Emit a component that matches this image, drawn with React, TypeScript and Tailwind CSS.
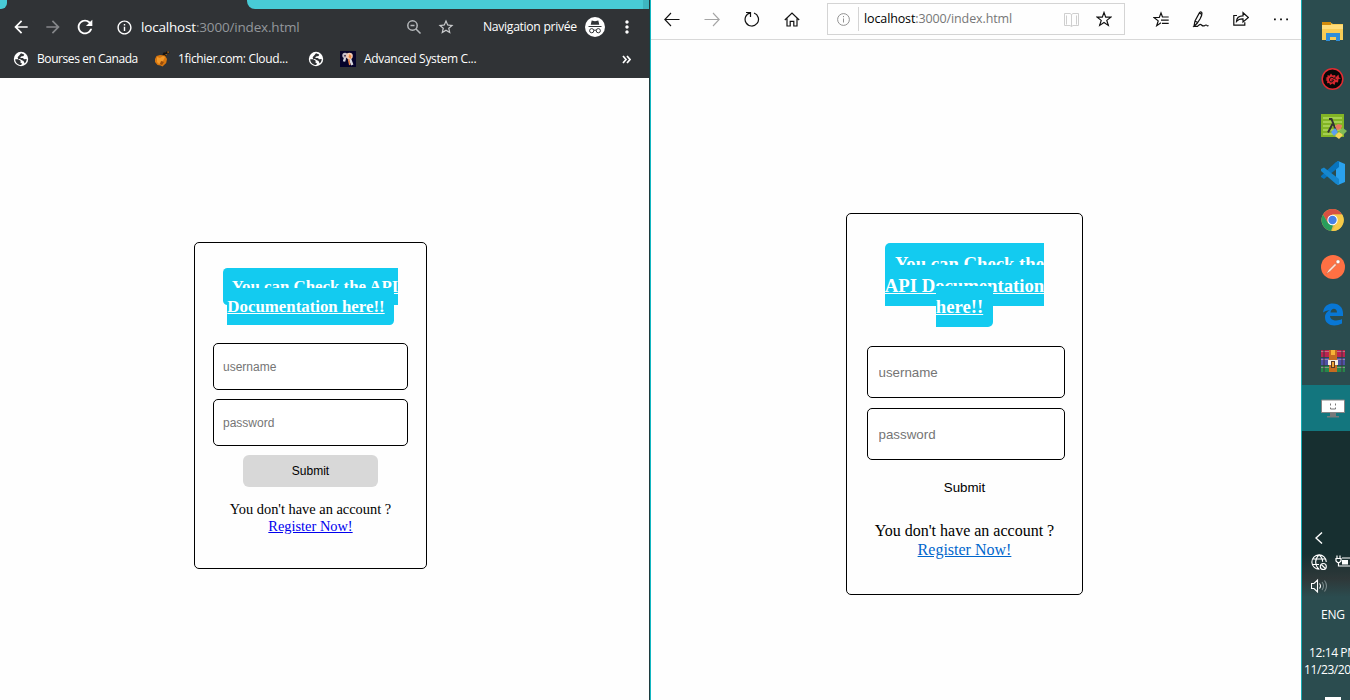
import React from 'react';
import { MdArrowBack, MdArrowForward, MdRefresh, MdInfoOutline, MdStarBorder, MdMoreVert } from 'react-icons/md';

const SEGOE = "font-['Open_Sans','Noto_Sans',sans-serif]";

function Globe() {
  return (
    <svg className="h-4 w-4 shrink-0" viewBox="0 0 16 16">
      <circle cx="8" cy="8" r="7.2" fill="#fff" />
      <path d="M2.2 8.2h3.2l2.2 1.6v2.1l1.6.6-1.1 1.6C4.7 14 2.2 11.300 2.200 8.200zM8 2.200l3.200 1.200-.6 1.500-2.600.600-.800 1.400h2.700l1.300 1.300 2.500-.3c0 1.800-.7 3.400-2 4.500l-1.200-2.300-2-1-1.600-1.200H5.200L4.600 6.300 6.600 4z" fill="#303336" />
    </svg>
  );
}

function Fruit() {
  return (
    <svg className="h-4 w-4 shrink-0" viewBox="0 0 16 16">
      <path d="M8 5l1.500-3.500H12V.5h3.500v1.700H13L12 5.500z" fill="#15120e" />
      <path d="M13.300.6h1.800v1.100h-1.800zM11.500 3h1.300v1.300h-1.300z" fill="#b06a17" />
      <path d="M1 8l1.500-3L6 4l5 .5 2 3.500-.8 4-3.700 3.500-2-1-3-.5L1 11z" fill="#d8770f" />
      <path d="M3 6l3 1 3-2 2 1-2 4-4 3-2-2z" fill="#f29a2b" />
      <path d="M7 10l3 1-2 3-2-1z" fill="#964c0b" />
    </svg>
  );
}

function KeysIcon() {
  return (
    <svg className="h-4 w-4 shrink-0" viewBox="0 0 16 16">
      <path fill="#06032b" d="M0 0h16v16H0z" />
      <path d="M5 7l-1 3.500M10 8l2.300 6" stroke="#d7d7e0" strokeWidth="2.400" />
      <path d="M8.500 8l1.300 6" stroke="#e98245" strokeWidth="1.500" />
      <circle cx="5" cy="4.500" r="2.700" fill="#c5bdc9" />
      <circle cx="9.500" cy="5" r="3.300" fill="#f0c9b4" />
      <path d="M9.500 3l2 2-1 3-2-2z" fill="#ed873e" />
      <path d="M4 4h2v1.500H4z" fill="#54465d" />
    </svg>
  );
}

function ChromeWindow() {
  return (
    <section className="flex h-full w-[649px] shrink-0 flex-col bg-[#fefefe]">
      <header className={`h-[78px] bg-[#303336] text-white ${SEGOE}`}>
        <div className="flex h-[9px] justify-between">
          <span className="w-[7px] rounded-br-[6px] bg-[#48cbd6]" />
          <span className="w-[402px] rounded-bl-[8px] border-r-[6px] border-[#3eb5c0] bg-[#48cbd6]" />
        </div>
        <div className="flex h-9 items-center">
          <MdArrowBack className="ml-[11px] h-5 w-5" />
          <MdArrowForward className="ml-3 h-5 w-5 text-[#85878a]" />
          <MdRefresh className="ml-[11px] h-[22px] w-[22px]" />
          <MdInfoOutline className="ml-[20px] h-[17px] w-[17px]" />
          <span className="ml-2 w-[160px] whitespace-nowrap text-[13.500px] tracking-[-0.18px]">
            localhost<span className="text-[#93979b]">:3000/index.html</span>
          </span>
          <svg className="ml-[105px] h-4 w-4" viewBox="0 0 16 16" fill="none" stroke="#b5b8bb" strokeWidth="1.500">
            <circle cx="6.500" cy="6.500" r="4.700" />
            <path d="M10 10l4.500 4.500M4.500 6.500h4" />
          </svg>
          <MdStarBorder className="ml-[15px] h-[18px] w-[18px] text-[#c9cbcd]" />
          <span className="ml-[28px] w-[94px] whitespace-nowrap text-[12.200px] tracking-[-0.32px]">Navigation privée</span>
          <svg className="ml-[8px] h-5 w-5" viewBox="0 0 20 20">
            <circle cx="10" cy="10" r="10" fill="#fff" />
            <path d="M6.700 3.500l3.300.7 3.300-.7 1 4.200H5.700zM3.500 9h13v1h-13z" fill="#303336" />
            <g fill="none" stroke="#303336" strokeWidth="1">
              <circle cx="6.700" cy="13.700" r="2.100" />
              <circle cx="13.300" cy="13.700" r="2.100" />
              <path d="M8.800 13.400q1.200-.8 2.400 0" />
            </g>
          </svg>
          <MdMoreVert className="ml-[12px] h-5 w-5" />
        </div>
        <div className="flex h-7 items-center whitespace-nowrap text-[12px]">
          <span className="ml-[13px] flex w-[141px] items-center gap-2"><Globe /><span className="tracking-[-0.42px]">Bourses en Canada</span></span>
          <span className="flex w-[154px] items-center gap-2"><Fruit /><span className="tracking-[-0.34px]">1fichier.com: Cloud...</span></span>
          <span className="flex w-8"><Globe /></span>
          <span className="flex items-center gap-2"><KeysIcon /><span className="tracking-[-0.31px]">Advanced System C...</span></span>
          <svg className="ml-auto mr-[18px] h-[9px] w-[9px]" viewBox="0 0 9 9" fill="none" stroke="#fff" strokeWidth="1.700">
            <path d="M1 1l3 3.500-3 3.500M5 1l3 3.500-3 3.500" />
          </svg>
        </div>
      </header>
      <main className="flex justify-center pr-[28px] pt-[164px]">
        <form className="flex h-[327px] w-[233px] flex-col items-center rounded-[5px] border border-black pt-[34px] font-['Liberation_Serif',serif]">
          <h3 className="w-[194px] text-center text-[16.850px] font-bold leading-[20px] text-white">
            <a href="#docs" className="rounded-[4.500px] bg-[#13cbf0] p-[9px] underline">You can Check the API Documentation here!!</a>
          </h3>
          <input aria-label="username" placeholder="username" className="mt-[26px] h-[47px] w-[195px] rounded-[5px] border border-black bg-white px-[9px] font-['Liberation_Sans',sans-serif] text-[12px] placeholder:text-[#757575]" />
          <input aria-label="password" type="password" placeholder="password" className="mt-[9px] h-[47px] w-[195px] rounded-[5px] border border-black bg-white px-[9px] font-['Liberation_Sans',sans-serif] text-[12px] placeholder:text-[#757575]" />
          <button type="button" className="mt-[9px] h-8 w-[135px] rounded-[6px] bg-[#d8d8d8] font-['Liberation_Sans',sans-serif] text-[12px] text-black">Submit</button>
          <p className="mt-[14px] text-center text-[14.400px] leading-[17px] text-black">
            You don't have an account ?<br />
            <a href="#register" className="text-[#0000ee] underline">Register Now!</a>
          </p>
        </form>
      </main>
    </section>
  );
}

function EdgeWindow() {
  return (
    <section className="flex h-full w-[650px] shrink-0 flex-col bg-[#fefefe]">
      <header className="flex h-10 items-center border-b border-[#d8d8d8] pb-px pl-[13px]">
        <svg className="h-4 w-4" viewBox="0 0 16 16" fill="none" stroke="#111" strokeWidth="1.100"><path d="M15.500 8.500H1M7 2L.8 8.500 7 15" /></svg>
        <svg className="ml-6 h-4 w-4" viewBox="0 0 16 16" fill="none" stroke="#a5a5a5" strokeWidth="1.100"><path d="M.5 8.500H15M9 2l6.200 6.500L9 15" /></svg>
        <svg className="ml-6 h-4 w-4" viewBox="0 0 16 16" fill="none" stroke="#111" strokeWidth="1.200"><path d="M2 1.500h4.500V6M6.300 1.800A6.700 6.700 0 1 0 10 2" /></svg>
        <svg className="ml-6 h-4 w-4" viewBox="0 0 16 16" fill="none" stroke="#111" strokeWidth="1.200"><path d="M.8 9L8 2l7.200 7M3 7.500V15h3.200v-4.700h3.600V15H13V7.500" /></svg>
        <div className={`ml-[27px] flex h-8 w-[298px] items-center border border-[#d4d4d4] ${SEGOE}`}>
          <svg className="ml-[9px] h-[13px] w-[13px]" viewBox="0 0 13 13" fill="none" stroke="#929292"><circle cx="6.500" cy="6.500" r="5.900" /><path d="M6.500 5.500v4M6.500 3v1.200" /></svg>
          <span className="ml-2 h-6 w-px bg-[#d4d4d4]" />
          <span className="ml-[5px] w-[148px] whitespace-nowrap pt-px text-[12.500px] tracking-[-0.12px] text-black">localhost<span className="text-[#777]">:3000/index.html</span></span>
          <svg className="ml-[52px] h-[15px] w-[15px]" viewBox="0 0 15 15" fill="none" stroke="#cfcfcf"><path d="M.5 1.500h5.500l1.500 1 1.500-1h5.500v12H9l-1.500 1-1.500-1H.5zM7.500 2.500v12M2.500 3.500v9M12.500 3.500v9" /></svg>
          <svg className="ml-[17px] h-4 w-4" viewBox="0 0 16 16" fill="none" stroke="#111" strokeWidth="1.200"><path d="M8 1.500l1.700 4.700h5.200l-4.100 3.200 1.500 5L8 11.500l-4.300 2.900 1.500-5L1.100 6.200h5.200z" /></svg>
        </div>
        <svg className="ml-[28px] h-4 w-4" viewBox="0 0 16 16" fill="none" stroke="#111" strokeWidth="1.200"><path d="M9.500 6L8 2 6.300 6.500H1l4.200 3.400-1.500 4.800L8 11.800M9 6h6.700M8 9.200h7.700M9 12.400h6.700" /></svg>
        <svg className="ml-6 h-4 w-4 overflow-visible" viewBox="0 0 16 16" fill="none" stroke="#111" strokeWidth="1.200"><path d="M1 15l1-5L6.500 1.700q1.500-1.700 2.500.3.200 2-2 6L4 12.500zM2 10l2.500 1.500M6.500 2l2 1.200M4 12.500L1 15.300h3.500q2.500-2.800 4-1.300 1.500 1.500 3 .7 1.700-1.300 2.500-.2.500.8 1.500.1" /></svg>
        <svg className="ml-6 h-4 w-4" viewBox="0 0 16 16" fill="none" stroke="#111" strokeWidth="1.200"><path d="M4 4.500H.8v9.700h11v-3M3.500 10.500q.2-5.700 6.500-5.700V1.700l5.400 4.800-5.400 4.500V7.800q-4.200-.2-6.500 2.700z" /></svg>
        <svg className="ml-6 h-4 w-4" viewBox="0 0 16 16" fill="#111"><path d="M1 7.500h1.800v1.800H1zM7.100 7.500h1.800v1.800H7.100zM13.200 7.500H15v1.800h-1.800z" /></svg>
      </header>
      <main className="flex justify-center pr-[23px] pt-[173px]">
        <form className="flex h-[382px] w-[237px] flex-col items-center rounded-[5px] border border-black pt-[39px] font-['Liberation_Serif',serif]">
          <h3 className="w-[172px] text-center text-[18.720px] font-bold leading-[21.500px] text-white">
            <a href="#docs" className="rounded-[5px] bg-[#13cbf0] p-[10px] underline">You can Check the API Documentation here!!</a>
          </h3>
          <input aria-label="username" placeholder="username" className="ml-[2px] mt-[28px] h-[52px] w-[198px] rounded-[5px] border border-black bg-white px-[11px] pt-px font-['Liberation_Sans',sans-serif] text-[13.330px] placeholder:text-[#757575]" />
          <input aria-label="password" type="password" placeholder="password" className="ml-[2px] mt-[10px] h-[52px] w-[198px] rounded-[5px] border border-black bg-white px-[11px] pt-px font-['Liberation_Sans',sans-serif] text-[13.330px] placeholder:text-[#757575]" />
          <button type="button" className="mt-[10px] h-9 w-[150px] rounded-[6px] pt-px font-['Liberation_Sans',sans-serif] text-[13.330px] text-black">Submit</button>
          <p className="mt-[15px] text-center text-[16px] leading-[19px] text-black">
            You don't have an account ?<br />
            <a href="#register" className="text-[#0066cc] underline">Register Now!</a>
          </p>
        </form>
      </main>
    </section>
  );
}

const taskIcons = [
  <g key="folder">
    <path d="M1 3h9l2 1h10v16H1z" fill="#f8cc56" /><path d="M1 2h9v3H1z" fill="#d18b0b" /><path d="M1 5h21v4H1z" fill="#ffdd7b" />
    <path d="M5 21v-8h14v8h-4v-4H9v4z" fill="#2e8edb" />
  </g>,
  <g key="gear">
    <circle cx="11.500" cy="12" r="10.300" fill="#080707" stroke="#e22c32" strokeWidth="1.500" />
    <path d="M4.500 11l2-1V8l2 .7L10 6.500l1.500 2 2.500-.5 1 2 2.500-2.500.5 3 2 1-2.500.5-.5 3.500-2.500-.5-1 3-2-1.500L9 18l-.7-2-2.300.3.300-2.300-1.800-1L6 12z" fill="#d7272e" />
    <path d="M13 11.500q-2-2.500-4-.5-1.500 2.500.5 4 2.500.500 3-2h-2M14.500 9.500l-1 2 2 1" fill="none" stroke="#111" />
  </g>,
  <g key="lambda">
    <path d="M0 0h23v23H0z" fill="#82b425" /><path d="M2 4h19M2 8h19M2 12h19M2 16h19M2 20h19" stroke="#a4cf51" strokeWidth="2" />
    <path d="M8 5h2.500l5 13M11.500 10L7 18.500" fill="none" stroke="#333" strokeWidth="2" />
    <path d="M14 12l3-2 4 1-1 4-4 1z" fill="#e77b5f" /><path d="M10 18l4-4 3 4-4 4z" fill="#5c9eee" /><path d="M18 17l4-3 4 3-4 4z" fill="#80b957" /><path d="M14 22l4-4 4 3-4 4z" fill="#f4d45b" />
  </g>,
  <g key="code">
    <path d="M17 0l7 3v18l-7 3-2-2V2z" fill="#2aa1ed" />
    <path d="M18 6L3 18l-3-2v-1L15 1l3-1z" fill="#0873bd" /><path d="M18 18L3 6.500 0 8v2l15 13 3 1z" fill="#1687cf" />
  </g>,
  <g key="chrome">
    <circle cx="11.500" cy="12" r="11" fill="#ddb94f" /><path d="M2 6.500a11 11 0 0 1 19 0h-9.500L7 15z" fill="#d85142" />
    <path d="M2 6.500L7 15l5 2.500-2 5.400A11 11 0 0 1 2 6.500z" fill="#299d5c" /><path d="M11.500 6.500h9.800a11 11 0 0 1-10.500 16.500l5-8.200z" fill="#f6ca48" />
    <circle cx="11.500" cy="12" r="5.200" fill="#fff" /><circle cx="11.500" cy="12" r="4.200" fill="#4780e5" />
  </g>,
  <g key="postman">
    <circle cx="12" cy="12" r="12" fill="#ff7043" /><path d="M5 19l2.500-4L14 8.500l1.500 1.500L9 16.500z" fill="#ffe3d7" stroke="#b96344" strokeWidth=".5" /><circle cx="17" cy="6.800" r="2" fill="#fff" stroke="#b96344" strokeWidth=".5" />
  </g>,
  <g key="edge">
    <path d="M2 10.500C3 4 7 1.500 12 1.500c6.500 0 10 4.500 10 9.500v3H9c.2 5 7.500 5.500 12 3v4.500c-8 4-17 1.500-17-6 0-4 2.300-6 5-7.500-3.500.5-5.500 1.500-7 2.500zM9.500 10.500H16c0-5-6-5-6.500 0z" fill="#0877d5" />
  </g>,
  <g key="archive">
    <path d="M0 1h24v7H0z" fill="#bd244e" /><path d="M0 9h24v7H0z" fill="#4e51a5" /><path d="M0 17h24v6H0z" fill="#26864a" />
    <path d="M0 2.500h24M0 10.500h24M0 18.500h24" stroke="#c4a5a7" strokeWidth=".6" /><path d="M3 1v22M21 1v22" stroke="#403044" />
    <path d="M8 1h8v22H8z" fill="#c56b20" /><path d="M7 11h10v5H7z" fill="#f4eee3" /><path d="M10 1h4v5h-4z" fill="#f6b337" /><path d="M10 12h4v7h-4z" fill="#583829" /><path d="M11 13h2v5h-2z" fill="#efa63a" />
  </g>,
  <g key="monitor">
    <path d="M.5 4h23v12.500H.5z" fill="#fff" stroke="#858585" /><path d="M9 17h6v3h3v1.500H6V20h3z" fill="#77797a" />
    <path d="M9.500 7.500v2M14.500 7.500v2M9.500 11.500V13h5v-1.500" fill="none" stroke="#777" />
  </g>,
];

function Taskbar() {
  return (
    <aside className={`flex h-full w-[49px] shrink-0 flex-col overflow-hidden border-l border-[#16aab3] bg-[#2b4c4f] text-white ${SEGOE}`}>
      <div className="h-2 shrink-0" />
      {taskIcons.map((icon, i) => (
        <div key={i} className={i === 8 ? 'mt-px flex h-[46px] shrink-0 items-center bg-[#13767e] pl-[19px]' : 'flex h-[47px] shrink-0 items-center pl-[19px]'}>
          <svg className="h-6 w-6 shrink-0 overflow-visible" viewBox="0 0 24 24">{icon}</svg>
        </div>
      ))}
      <div className="flex grow flex-col bg-[linear-gradient(#172f30_0px,#172f30_123px,#2e3839_148px,#2b4c4f_166px,#2b4c4f_100%)]">
        <svg className="ml-[13px] mt-[101px] h-3 w-2 shrink-0" viewBox="0 0 8 12" fill="none" stroke="#fff" strokeWidth="1.400"><path d="M7 .5L1 6l6 5.500" /></svg>
        <div className="mt-[10px] flex h-4 shrink-0 gap-2 pl-[9px]">
          <svg className="h-4 w-4 shrink-0" viewBox="0 0 16 16" fill="none" stroke="#fff" strokeWidth="1.100"><path d="M8.500 15.300A7.200 7.200 0 1 1 15.300 8M8 .8C3.500 5 3.500 11 8 15.300M8 .8c2.500 2 3.600 4.500 3.600 7M1.500 5h13M1 10.500h7" /><circle cx="12.300" cy="12.500" r="3" /><path d="M10.300 10.500l4 4" /></svg>
          <svg className="h-4 w-5 shrink-0" viewBox="0 0 20 16" fill="none" stroke="#fff" strokeWidth="1.200"><path d="M2 1.500v3M5 1.500v3M1 4.500h5v2.500l-1.500 1.500h-2L1 7zM3.500 8.500v3.500H20M7 4h13" /><path d="M7 6h6v4.500H7z" fill="#fff" stroke="none" /></svg>
        </div>
        <svg className="ml-[9px] mt-[8px] h-4 w-4 shrink-0" viewBox="0 0 16 16" fill="none" stroke="#fff" strokeWidth="1.100"><path d="M.5 5.500h2.500L6.500 2v12L3 10.500H.5zM8.500 5.500q2 2.500 0 5" /><path d="M11 4q3 4 0 8M13.500 2.500q4 5.500 0 11" stroke="#79888a" /></svg>
        <span className="ml-[19px] mt-[13px] text-[12px] leading-4 tracking-[-0.2px]">ENG</span>
        <span className="ml-[7px] mt-[22px] whitespace-nowrap text-[12px] leading-4 tracking-[-0.4px]">12:14 PM</span>
        <span className="ml-[2px] mt-px whitespace-nowrap text-[12px] leading-4 tracking-[-0.4px]">11/23/2019</span>
        <span className="ml-[23px] mt-auto h-[3px] w-4 shrink-0 bg-white" />
      </div>
    </aside>
  );
}

export default function App() {
  return (
    <div className="flex h-[700px] w-[1350px] overflow-hidden bg-[#fefefe]">
      <ChromeWindow />
      <div className="h-full w-[2px] shrink-0 border-l border-[#1d3b3e] bg-[#12b7c2]" />
      <EdgeWindow />
      <Taskbar />
    </div>
  );
}
